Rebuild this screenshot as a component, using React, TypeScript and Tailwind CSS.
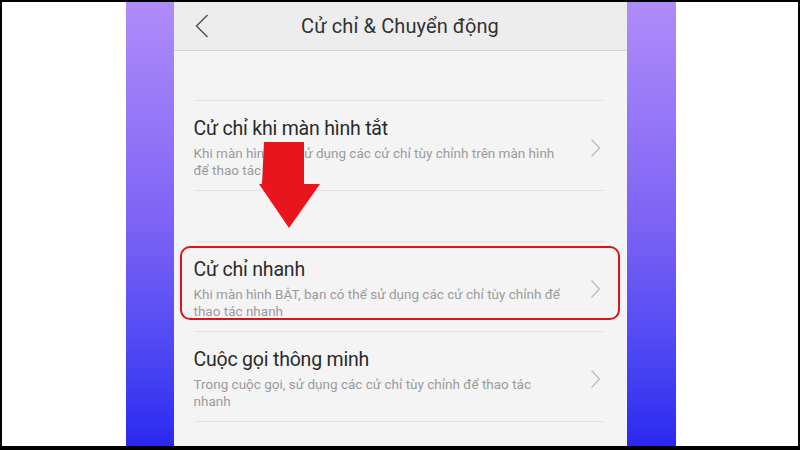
const items = [
  {
    title: 'Cử chỉ khi màn hình tắt',
    desc: 'Khi màn hình tắt, sử dụng các cử chỉ tùy chỉnh trên màn hình để thao tác nhanh',
  },
  {
    title: 'Cử chỉ nhanh',
    desc: 'Khi màn hình BẬT, bạn có thể sử dụng các cử chỉ tùy chỉnh để thao tác nhanh',
  },
  {
    title: 'Cuộc gọi thông minh',
    desc: 'Trong cuộc gọi, sử dụng các cử chỉ tùy chỉnh để thao tác nhanh',
  },
];

const RowChevron = () => (
  <svg className="absolute right-[3px] top-[37px]" width="11" height="20" viewBox="0 0 11 20" fill="none">
    <polyline points="1.5,1.5 9.5,10 1.5,18.5" stroke="#bcbcbc" strokeWidth="1.3" />
  </svg>
);

const SettingRow = ({ title, desc, highlight }: { title: string; desc: string; highlight?: boolean }) => (
  <div className="relative h-[90px] border-b border-[#e2e2e2] pt-[15px]">
    {highlight && (
      <div className="absolute -left-[14px] -right-[16px] top-[4px] bottom-[11px] border-2 border-[#d9141b] rounded-[10px]" />
    )}
    <div className="pr-[33px]">
      <p className="text-[19.5px] leading-[26px] text-[#2a2a2a] tracking-[-0.2px]">{title}</p>
      <p className="text-[13.5px] leading-[17px] text-[#9b9b9b] mt-[3px]">{desc}</p>
    </div>
    <RowChevron />
  </div>
);

const App = () => {
  return (
    <div
      className="w-[800px] h-[450px] bg-black pt-[2px] px-[2px] pb-[4px]"
      style={{ fontFamily: 'Roboto, "Noto Sans", sans-serif' }}
    >
      <div className="h-full bg-white flex justify-center pl-[1px]">
        <div className="w-[48px] h-full bg-gradient-to-b from-[#b08cf9] via-[#7d62f5] to-[#2a27f1]" />
        <div className="w-[453px] h-full bg-[#f4f4f4] flex flex-col overflow-hidden">
          <div className="h-[49px] shrink-0 bg-[#ededed] border-b border-[#d4d4d4] relative flex items-center justify-center">
            <svg className="absolute left-[21px] top-[12px]" width="14" height="24" viewBox="0 0 14 24" fill="none">
              <polyline points="12.5,1 1.5,12 12.5,23" stroke="#555" strokeWidth="1.5" />
            </svg>
            <span className="text-[20px] text-[#333] tracking-[0.1px]">Cử chỉ &amp; Chuyển động</span>
          </div>
          <div className="relative flex-1 px-[20px] pr-[23px]">
            <div className="h-[50px] border-b border-[#e2e2e2]" />
            <SettingRow title={items[0].title} desc={items[0].desc} />
            <div className="h-[51px] border-b border-[#e2e2e2]" />
            <SettingRow title={items[1].title} desc={items[1].desc} highlight />
            <SettingRow title={items[2].title} desc={items[2].desc} />
            {/* red arrow annotation */}
            <svg className="absolute left-[85px] top-[91px]" width="62" height="87" viewBox="0 0 62 87">
              <polygon points="5,0 45,0 45,42 61,42 30,86 0,42 3,42" fill="#e8151d" />
            </svg>
          </div>
        </div>
        <div className="w-[49px] h-full bg-gradient-to-b from-[#b08cf9] via-[#7d62f5] to-[#2a27f1]" />
      </div>
    </div>
  );
};

export default App;
